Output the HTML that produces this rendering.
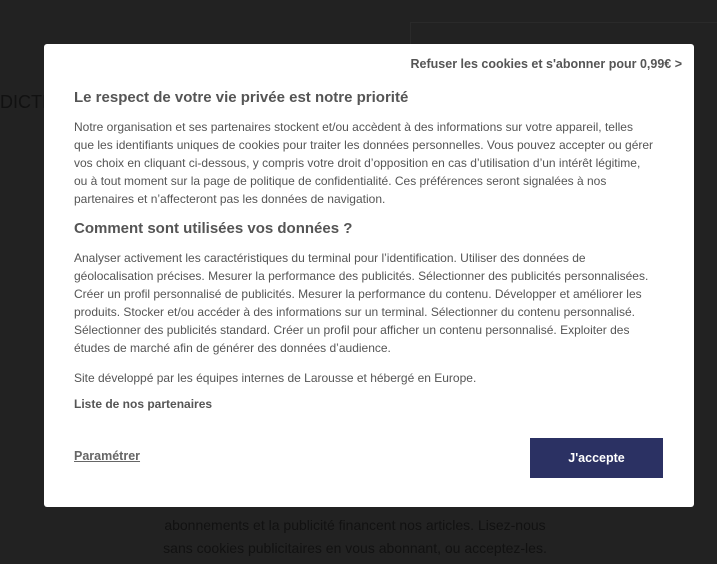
<!DOCTYPE html>
<html><head><meta charset="utf-8"><style>
body{margin:0;width:717px;height:564px;background:#222;position:relative;overflow:hidden;font-family:"Liberation Sans",sans-serif}
.bg{position:absolute;color:#111;font-size:14px}
.m{position:absolute;left:44px;top:44px;width:650px;height:463px;background:#fff;border-radius:3px;color:#555}
.t{position:absolute;white-space:nowrap}
p{position:absolute;left:30px;margin:0;font-size:12px;line-height:18px;white-space:nowrap}
h2{position:absolute;left:30px;margin:0;font-size:15px;font-weight:bold;color:#555}
</style></head><body>
<div class="bg" style="left:410px;top:22px;width:307px;height:22px;border-top:1px solid #2a2a2a;border-left:1px solid #2a2a2a"></div>
<div class="bg" style="left:0;top:92px;font-size:18px">DICTI</div>
<div class="bg" style="left:140px;top:514px;line-height:23px;width:430px;text-align:center">abonnements et la publicité financent nos articles. Lisez-nous<br>sans cookies publicitaires en vous abonnant, ou acceptez-les.</div>
<div class="m">
<div class="t" style="right:12px;top:13px;font-size:12.5px;font-weight:bold;color:#555">Refuser les cookies et s'abonner pour 0,99€ &gt;</div>
<h2 style="top:45px">Le respect de votre vie privée est notre priorité</h2>
<p style="top:74px">Notre organisation et ses partenaires stockent et/ou accèdent à des informations sur votre appareil, telles<br>que les identifiants uniques de cookies pour traiter les données personnelles. Vous pouvez accepter ou gérer<br>vos choix en cliquant ci-dessous, y compris votre droit d’opposition en cas d’utilisation d’un intérêt légitime,<br>ou à tout moment sur la page de politique de confidentialité. Ces préférences seront signalées à nos<br>partenaires et n’affecteront pas les données de navigation.</p>
<h2 style="top:176px">Comment sont utilisées vos données ?</h2>
<p style="top:205px">Analyser activement les caractéristiques du terminal pour l’identification. Utiliser des données de<br>géolocalisation précises. Mesurer la performance des publicités. Sélectionner des publicités personnalisées.<br>Créer un profil personnalisé de publicités. Mesurer la performance du contenu. Développer et améliorer les<br>produits. Stocker et/ou accéder à des informations sur un terminal. Sélectionner du contenu personnalisé.<br>Sélectionner des publicités standard. Créer un profil pour afficher un contenu personnalisé. Exploiter des<br>études de marché afin de générer des données d’audience.</p>
<p style="top:325px">Site développé par les équipes internes de Larousse et hébergé en Europe.</p>
<p style="top:351px;font-weight:bold">Liste de nos partenaires</p>
<div class="t" style="left:30px;top:405px;font-size:12.5px;font-weight:bold;text-decoration:underline;color:#666">Paramétrer</div>
<div style="position:absolute;left:486px;top:394px;width:133px;height:40px;background:#2b3163;color:#fff;font-size:12.5px;font-weight:bold;text-align:center;line-height:40px">J'accepte</div>
</div>
</body></html>
